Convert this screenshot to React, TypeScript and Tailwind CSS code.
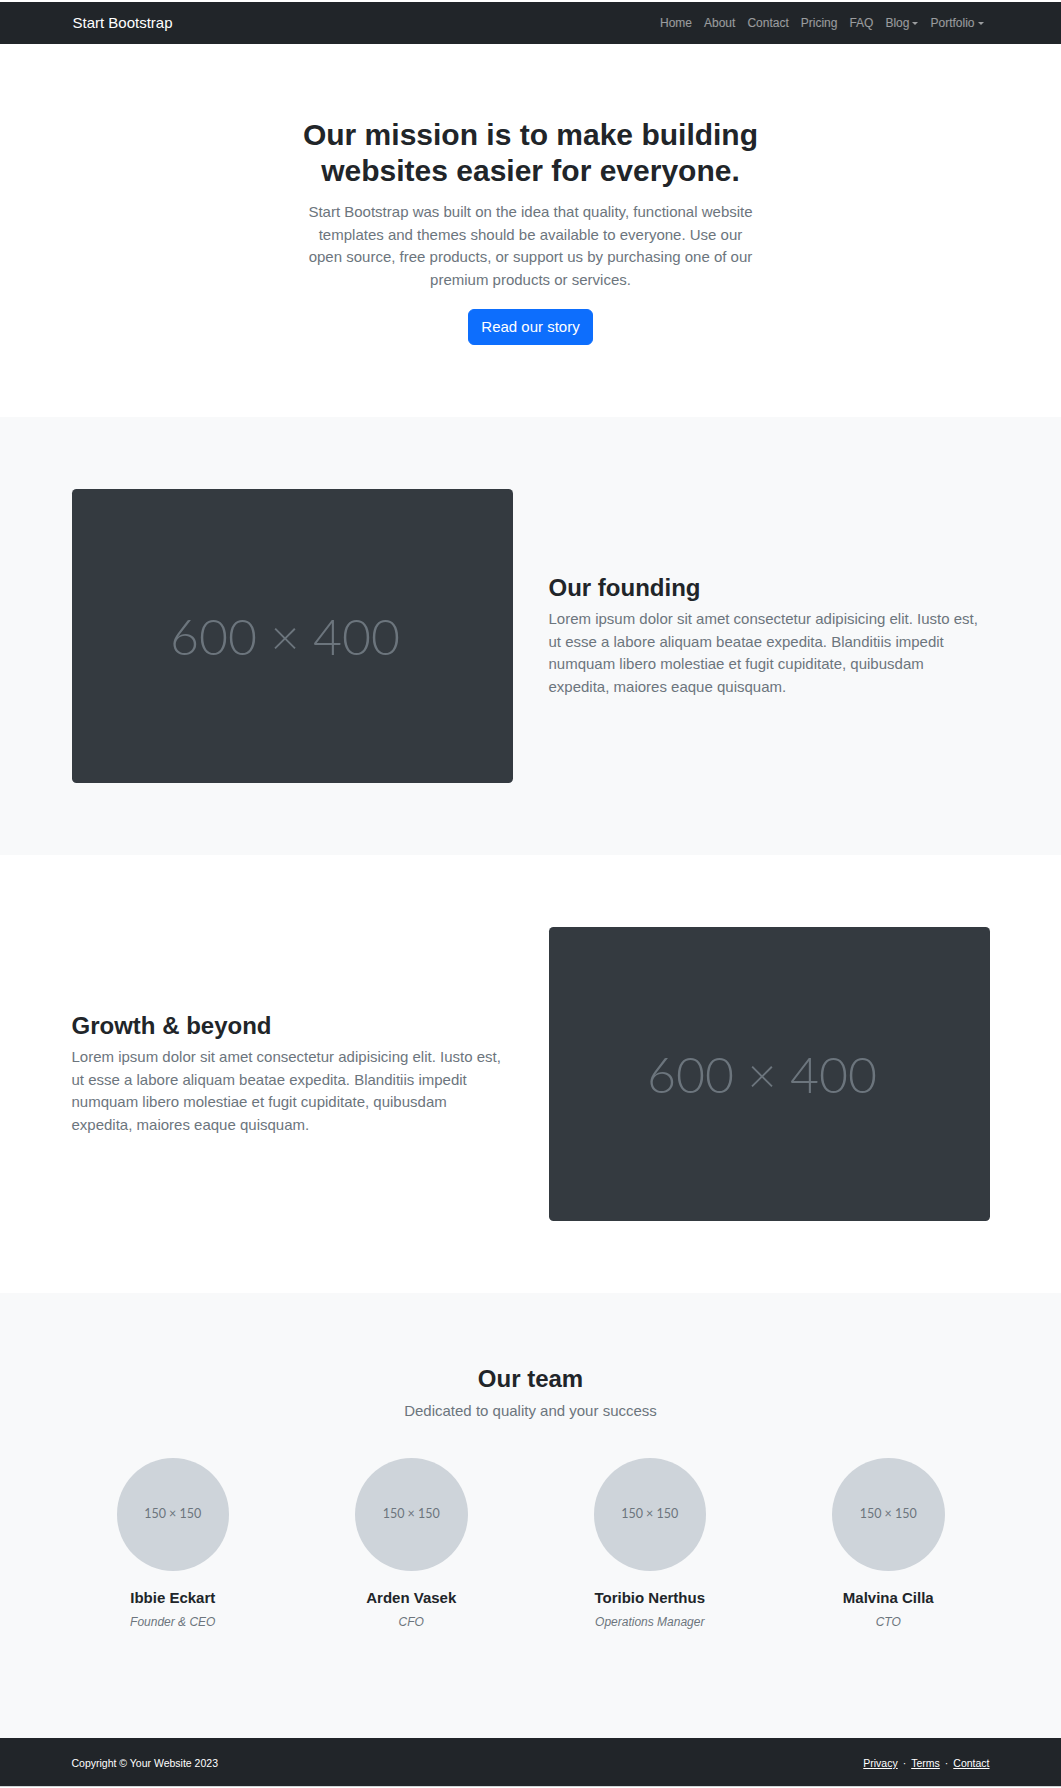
import React from "react";

const Container = ({ children, className = "" }: { children: React.ReactNode; className?: string }) => (
  <div className={`mx-auto w-[990px] px-[36px] ${className}`}>{children}</div>
);

const Caret = () => (
  <span className="ml-[3px] inline-block h-0 w-0 border-x-[3.6px] border-t-[3.6px] border-b-0 border-x-transparent border-t-current align-[2px]" />
);

const BigPlaceholder = () => (
  <div className="flex h-[294px] items-center justify-center rounded-[4.5px] bg-[#343a40]">
    <span className="pr-[14px] font-['Lato',sans-serif] text-[50px] font-light leading-none text-[#6c757d]">
      600 × 400
    </span>
  </div>
);

const Lorem = () => (
  <p className="whitespace-nowrap text-[15px] leading-[22.5px] text-[#6c757d]">
    Lorem ipsum dolor sit amet consectetur adipisicing elit. Iusto est,
    <br />
    ut esse a labore aliquam beatae expedita. Blanditiis impedit
    <br />
    numquam libero molestiae et fugit cupiditate, quibusdam
    <br />
    expedita, maiores eaque quisquam.
  </p>
);

const team = [
  { name: "Ibbie Eckart", role: "Founder & CEO" },
  { name: "Arden Vasek", role: "CFO" },
  { name: "Toribio Nerthus", role: "Operations Manager" },
  { name: "Malvina Cilla", role: "CTO" },
];

export default function App() {
  const navItems: { label: string; caret?: boolean }[] = [
    { label: "Home" },
    { label: "About" },
    { label: "Contact" },
    { label: "Pricing" },
    { label: "FAQ" },
    { label: "Blog", caret: true },
    { label: "Portfolio", caret: true },
  ];

  return (
    <div className="bg-white font-['Liberation_Sans',Arial,sans-serif] text-[#212529]">
      <nav className="mt-[2px] h-[42px] bg-[#212529]">
        <Container className="flex h-full items-center justify-between">
          <a className="pl-[1px] text-[15px] leading-[22.5px] text-white">Start Bootstrap</a>
          <ul className="flex items-center text-[12px] leading-[18px] text-white/55">
            {navItems.map((it) => (
              <li key={it.label} className="px-[6px] py-[6px]">
                {it.label}
                {it.caret && <Caret />}
              </li>
            ))}
          </ul>
        </Container>
      </nav>

      <header className="bg-white pt-[37px] pb-[36px]">
        <Container className="flex justify-center">
          <div className="my-[36px] w-[477px] text-center">
            <h1 className="mb-[12px] text-[30px] font-bold leading-[36px] text-[#212529]">
              Our mission is to make building websites easier for everyone.
            </h1>
            <p className="mb-[18px] whitespace-nowrap text-[15px] leading-[22.5px] text-[#6c757d]">
              Start Bootstrap was built on the idea that quality, functional website
              <br />
              templates and themes should be available to everyone. Use our
              <br />
              open source, free products, or support us by purchasing one of our
              <br />
              premium products or services.
            </p>
            <a className="inline-block rounded-[6px] border border-[#0d6efd] bg-[#0d6efd] px-[12px] py-[5.75px] text-[15px] leading-[22.5px] text-white">
              Read our story
            </a>
          </div>
        </Container>
      </header>

      <section className="bg-[#f8f9fa] py-[72px]">
        <Container>
          <div className="grid grid-cols-2 items-center gap-x-[36px]">
            <BigPlaceholder />
            <div>
              <h2 className="mb-[6px] text-[24px] font-bold leading-[28.8px] text-[#212529]">Our founding</h2>
              <Lorem />
            </div>
          </div>
        </Container>
      </section>

      <section className="bg-white py-[72px]">
        <Container>
          <div className="grid grid-cols-2 items-center gap-x-[36px]">
            <div>
              <h2 className="mb-[6px] text-[24px] font-bold leading-[28.8px] text-[#212529]">Growth &amp; beyond</h2>
              <Lorem />
            </div>
            <BigPlaceholder />
          </div>
        </Container>
      </section>

      <section className="bg-[#f8f9fa] py-[72px]">
        <Container>
          <div className="text-center">
            <h2 className="mb-[6px] text-[24px] font-bold leading-[28.8px] text-[#212529]">Our team</h2>
            <p className="mb-[36px] text-[15px] leading-[22.5px] text-[#6c757d]">Dedicated to quality and your success</p>
          </div>
          <div className="grid grid-cols-4 gap-x-[36px] pb-[35px]">
            {team.map((m) => (
              <div key={m.name} className="flex flex-col items-center text-center">
                <div className="mb-[18px] flex h-[112.5px] w-[112.5px] items-center justify-center rounded-full bg-[#ced4da]">
                  <span className="font-['Lato',sans-serif] text-[12.5px] leading-none text-[#6c757d]">150 × 150</span>
                </div>
                <h5 className="mb-[6px] text-[15px] font-bold leading-[18px] text-[#212529]">{m.name}</h5>
                <div className="text-[12px] italic leading-[18px] text-[#6c757d]">{m.role}</div>
              </div>
            ))}
          </div>
        </Container>
      </section>

      <footer className="h-[48px] bg-[#212529]">
        <Container className="flex h-full items-center justify-between pt-[4px]">
          <div className="text-[10.5px] leading-[15.75px] text-white">Copyright © Your Website 2023</div>
          <div className="text-[10.5px] leading-[15.75px] text-white">
            <a className="underline">Privacy</a>
            <span className="mx-[5px]">·</span>
            <a className="underline">Terms</a>
            <span className="mx-[5px]">·</span>
            <a className="underline">Contact</a>
          </div>
        </Container>
      </footer>
      <div className="h-px bg-[#d1d3d5]" />
    </div>
  );
}
